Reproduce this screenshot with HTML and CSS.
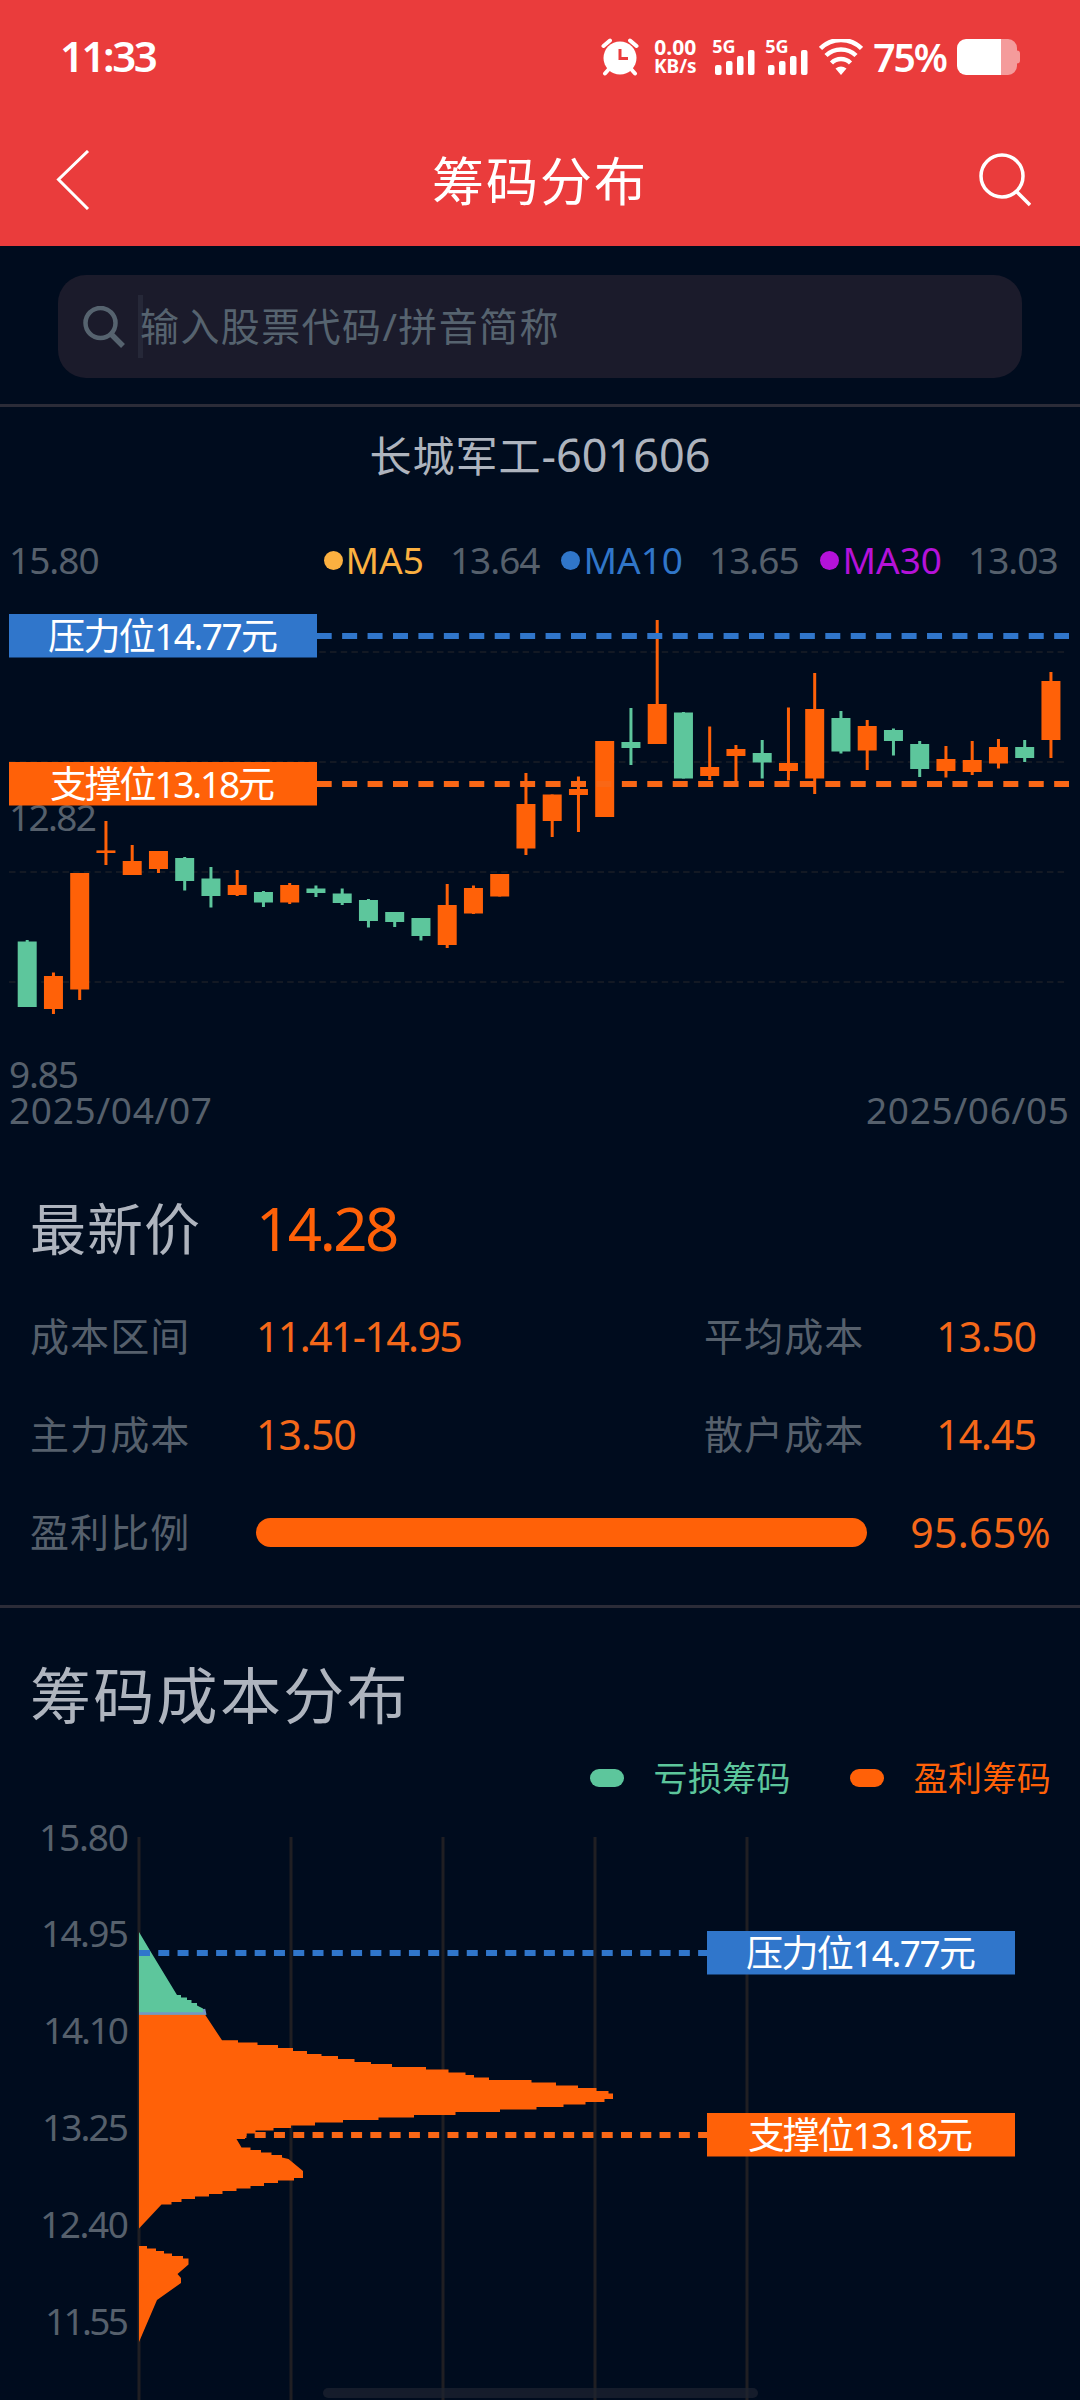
FILE: index.html
```
<!DOCTYPE html>
<html lang="zh-CN">
<head>
    <meta charset="UTF-8">
    <meta name="viewport" content="width=device-width, initial-scale=1.0">
    <title>筹码分布</title>
    <link rel="stylesheet" href="styles.css">
</head>
<body>
    <header class="header">
        <div class="status-bar">
            <span class="time">11:33</span>
            <svg class="alarm" width="38" height="38" viewBox="0 0 38 38">
                <circle cx="19" cy="20" r="16.500" fill="#fff"/>
                <path d="M2.500 8 9 2.500M35.500 8 29 2.500M8 31l-4 4.500M30 31l4 4.500" stroke="#fff" stroke-width="4" stroke-linecap="round"/>
                <path d="M19 11v9.500h8" fill="none" stroke="#ea3c3c" stroke-width="3"/>
            </svg>
            <div class="speed"><span>0.00</span><span>KB/s</span></div>
            <div class="signal">
                <span>5G</span>
                <svg width="42" height="26" viewBox="0 0 42 26">
                    <g fill="#fff"><rect x="2" y="16" width="6.500" height="10" rx="2"/><rect x="13" y="12" width="6.500" height="14" rx="2"/><rect x="24" y="7" width="6.500" height="19" rx="2"/><rect x="35" y="1" width="6.500" height="25" rx="2"/></g>
                </svg>
            </div>
            <div class="signal">
                <span>5G</span>
                <svg width="42" height="26" viewBox="0 0 42 26">
                    <g fill="#fff"><rect x="2" y="16" width="6.500" height="10" rx="2"/><rect x="13" y="12" width="6.500" height="14" rx="2"/><rect x="24" y="7" width="6.500" height="19" rx="2"/><rect x="35" y="1" width="6.500" height="25" rx="2"/></g>
                </svg>
            </div>
            <svg class="wifi" width="44" height="36" viewBox="0 0 44 36">
                <g fill="none" stroke="#fff" stroke-width="4.500">
                    <path d="M1.500 9.500a29 29 0 0 1 41 0"/>
                    <path d="M7 16.500a21.500 21.500 0 0 1 30 0"/>
                    <path d="M12.500 24a13.500 13.500 0 0 1 19 0"/>
                </g>
                <path d="M16.500 29.500q5.500-4 11 0L22 36z" fill="#fff"/>
            </svg>
            <span class="percent">75%</span>
            <svg class="battery" width="63" height="36" viewBox="0 0 63 36">
                <path d="M44 0h7a9 9 0 0 1 9 9v2.500q3 0 3 3v7q0 3-3 3V27a9 9 0 0 1-9 9h-7z" fill="#f49b9b"/>
                <path d="M9 0h35v36H9a9 9 0 0 1-9-9V9a9 9 0 0 1 9-9z" fill="#fff"/>
            </svg>
        </div>
        <div class="nav-bar">
            <svg width="34" height="60" viewBox="0 0 34 60"><path d="M32 1 2.500 29.500 32 59" fill="none" stroke="#fff" stroke-width="3"/></svg>
            <h1>筹码分布</h1>
            <svg width="52" height="54" viewBox="0 0 52 54"><circle cx="23" cy="23" r="21" fill="none" stroke="#fff" stroke-width="3.500"/><path d="M37 38l14 14" stroke="#fff" stroke-width="3.500"/></svg>
        </div>
    </header>

    <div class="search-wrap">
        <div class="search-box">
            <svg width="42" height="42" viewBox="0 0 42 42"><circle cx="17.500" cy="17" r="15" fill="none" stroke="#56636f" stroke-width="4.500"/><path d="M28 28l12 12" stroke="#56636f" stroke-width="5.500"/></svg>
            <span class="caret"></span>
            <span class="placeholder">输入股票代码/拼音简称</span>
        </div>
    </div>

    <section class="kline">
        <h2>长城军工<span>-601606</span></h2>
        <div class="ma-row">
            <span class="top-price">15.80</span>
            <span class="ma ma5"><i></i>MA5</span><span class="num">13.64</span>
            <span class="ma ma10"><i></i>MA10</span><span class="num">13.65</span>
            <span class="ma ma30"><i></i>MA30</span><span class="num">13.03</span>
        </div>
        <svg class="chart" id="kline" width="1080" height="540" viewBox="0 600 1080 540">
            <g class="grid-dash">
                <path d="M9 652H1066M9 762H1066M9 872H1066M9 982H1066"/>
            </g>
            <g class="axis">
                <text x="9" y="831" textLength="88">12.82</text>
                <text x="9" y="1087.500" textLength="70">9.85</text>
                <text x="9" y="1124" textLength="203">2025/04/07</text>
                <text x="866" y="1124" textLength="203">2025/06/05</text>
            </g>
            <g id="candles"></g>
            <path class="dash blue" d="M316.700 636H1069"/>
            <path class="dash orange" d="M316.700 784H1069"/>
            <rect class="fill-blue" x="9" y="614" width="308" height="43.500"/>
            <rect class="fill-orange" x="9" y="762" width="308" height="43.500"/>
            <text class="tag" x="48" y="650" textLength="230">压力位14.77元</text>
            <text class="tag" x="50" y="798" textLength="225">支撑位13.18元</text>
        </svg>
    </section>

    <section class="stats">
        <div class="stat-row latest"><span class="label">最新价</span><span class="value">14.28</span></div>
        <div class="stat-row">
            <span class="label">成本区间</span><span class="value range">11.41-14.95</span>
            <span class="label second">平均成本</span><span class="value right">13.50</span>
        </div>
        <div class="stat-row">
            <span class="label">主力成本</span><span class="value">13.50</span>
            <span class="label second">散户成本</span><span class="value right">14.45</span>
        </div>
        <div class="stat-row">
            <span class="label">盈利比例</span>
            <span class="progress"></span>
            <span class="value ratio">95.65%</span>
        </div>
    </section>

    <section class="chips">
        <h2>筹码成本分布</h2>
        <div class="legend">
            <span class="loss"><i></i>亏损筹码</span>
            <span class="profit"><i></i>盈利筹码</span>
        </div>
        <svg class="chart" width="1080" height="590" viewBox="0 1810 1080 590">
            <path class="grid-line" d="M139 1837V2400M291 1837V2400M443 1837V2400M595 1837V2400M747 1837V2400"/>
            <g class="axis">
                <text x="39" y="1850.500" textLength="90">15.80</text>
                <text x="41" y="1946.500" textLength="88">14.95</text>
                <text x="43" y="2044" textLength="86">14.10</text>
                <text x="42" y="2140.500" textLength="87">13.25</text>
                <text x="40" y="2238" textLength="89">12.40</text>
                <text x="45" y="2334.500" textLength="84">11.55</text>
            </g>
            <path class="dash-small orange" d="M139 2135H707"/>
            <path class="fill-green" d="M139 1932 151.500 1953 177 1995H181V1997.500H187V2000H191.500V2003H197V2005.500L203 2008.500 206 2015H139Z"/>
            <path class="fill-orange" d="M139 2014.500H205L222 2040.300H238V2042.500H257.500V2045H278V2048H293V2051H307V2054H321.500V2056H338V2059H354.500V2062H371V2064H392V2067H426V2069.500H448.500V2072.500H465.500V2075H474V2077.500H489V2080H531.500V2082.500H556V2085.500H578V2088H596.500V2091H608.500V2093.500H613V2099H604.500V2102H585.500V2104.500H563.500V2107H536.500V2109.500H500V2112H455.500V2115H414V2117.500H378.500V2120H343V2122.500H315V2125.500H291V2128H273.500V2130.500H255.500V2133.500H246.500V2136H245V2139H236.500L241.500 2147.500H250.500V2150H261V2152.500H271.500V2155H282V2157.500L288.500 2159 303 2171V2178H294V2180.500H278V2183H264V2186H250.500V2188.500H236.500V2191H222.500V2194H209V2196.500H195V2199H181.500V2202H171.500V2204.500H161.500L139 2228.500Z"/>
            <path class="fill-orange" d="M139 2246H147V2248.500H156V2251H164V2253.500H172V2256H183V2258.500H188.500V2264.500L177.500 2274 181 2278V2283L157 2300 139 2342Z"/>
            <path d="M139 2013.500H205L204 2009" fill="none" stroke="#7396c4" stroke-width="2.500"/>
            <path class="dash-small blue" d="M139 1953H707"/>
            <rect class="fill-blue" x="707" y="1931" width="308" height="43.500"/>
            <rect class="fill-orange" x="707" y="2113" width="308" height="43.500"/>
            <text class="tag" x="746" y="1967" textLength="230">压力位14.77元</text>
            <text class="tag" x="748" y="2149" textLength="225">支撑位13.18元</text>
        </svg>
    </section>
    <div class="home-bar"></div>

    <script src="script.js"></script>
</body>
</html>
```
FILE: styles.css
```
* {
    box-sizing: border-box;
}

body {
    margin: 0;
    height: 2400px;
    overflow: hidden;
    position: relative;
    background-color: #000c1e;
    color: #aeb4be;
    font-family: "Noto Sans", "Noto Sans CJK SC", sans-serif;
}

h1, h2 {
    margin: 0;
    font-weight: 400;
}

svg {
    display: block;
    flex-shrink: 0;
}

/* Header */
.header {
    height: 246px;
    background-color: #ea3c3c;
    color: #fff;
}

.status-bar {
    display: flex;
    align-items: center;
    height: 114px;
    padding: 0 60px 0 60px;
}

.time {
    font-size: 42px;
    font-weight: 600;
    line-height: 50px;
    letter-spacing: -2.5px;
    margin: -2px auto 0 0;
}

.speed {
    display: flex;
    flex-direction: column;
    align-items: center;
    width: 50px;
    margin: 0 13px 0 11px;
    font-size: 21px;
    font-weight: 700;
    line-height: 19px;
}

.speed span + span {
    font-size: 19px;
}

.signal {
    position: relative;
    width: 42px;
    height: 36px;
    padding-top: 10px;
    margin-right: 11px;
}

.signal span {
    position: absolute;
    left: -1px;
    top: -2px;
    font-size: 18px;
    font-weight: 700;
    line-height: 18px;
}

.percent {
    font-size: 39px;
    font-weight: 600;
    line-height: 50px;
    letter-spacing: -2px;
    margin: 0 11px 0 10px;
}

.nav-bar {
    display: flex;
    align-items: center;
    justify-content: space-between;
    height: 132px;
    padding: 0 49px 0 56px;
}

.nav-bar svg {
    margin-bottom: 1px;
}

.nav-bar h1 {
    font-size: 52px;
    line-height: 60px;
    letter-spacing: 2px;
    margin: 2px 0 0 11px;
}

/* Search */
.search-wrap {
    height: 161px;
    padding: 29px 58px;
    border-bottom: 3px solid #2b2c38;
}

.search-box {
    display: flex;
    align-items: center;
    height: 103px;
    padding-left: 25px;
    border-radius: 28px;
    background-color: #1b1b2b;
}

.caret {
    width: 5px;
    height: 63px;
    margin-left: 13px;
    background-color: #262838;
}

.placeholder {
    font-size: 39px;
    line-height: 50px;
    letter-spacing: 1.4px;
    margin: -2px 0 0 -3px;
    color: #56636f;
}

/* K line */
.kline {
    height: 758px;
}

.kline h2 {
    height: 96px;
    padding-top: 18px;
    font-size: 42px;
    line-height: 60px;
    letter-spacing: 1px;
    text-align: center;
}

.kline h2 span {
    font-size: 45px;
    letter-spacing: 0;
}

.ma-row {
    display: flex;
    align-items: center;
    height: 97px;
    padding: 17px 22px 0 9px;
    font-size: 37px;
    line-height: 50px;
    letter-spacing: -1px;
}

.top-price {
    margin-right: auto;
}

.top-price, .num {
    color: #56606c;
}

.ma {
    display: flex;
    align-items: center;
    letter-spacing: 0;
}

.ma i {
    width: 19px;
    height: 19px;
    margin-right: 3px;
    border-radius: 50%;
    background-color: currentColor;
}

.num {
    width: 90px;
    margin: 0 21.5px 0 26px;
}

.num:last-child {
    margin-right: 0;
}

.ma5 { color: #fbb040; }
.ma10 { color: #3076c9; }
.ma30 { color: #b512d9; }

/* Charts */
.axis text {
    font-size: 37px;
    fill: #56606c;
}

.tag {
    font-size: 37px;
    fill: #fff;
}

.fill-blue { fill: #3076cb; }
.fill-orange { fill: #ff6108; }
.fill-green { fill: #5dc69c; }

.blue { stroke: #3076cb; }
.orange { stroke: #f96716; }

.dash {
    stroke-width: 6;
    stroke-dasharray: 15 10.43;
}

.dash-small {
    stroke-width: 6;
    stroke-dasharray: 11 8.28;
}

.grid-dash path {
    stroke: #131924;
    stroke-width: 2;
    stroke-dasharray: 6.5 4.2;
}

.grid-line {
    stroke: #201f23;
    stroke-width: 3;
}

/* Stats */
.stats {
    height: 443px;
    padding: 21px 0 0 30px;
    border-bottom: 3px solid #2b2c38;
}

.stat-row {
    display: flex;
    align-items: center;
    height: 98px;
    font-size: 39px;
    line-height: 60px;
}

.stat-row .label {
    width: 226px;
    letter-spacing: 1.1px;
    color: #56606c;
}

.stat-row .value {
    width: 448px;
    font-size: 41px;
    letter-spacing: -1px;
    color: #f5681a;
}

.stat-row .range {
    letter-spacing: -1.6px;
}

.stat-row .second {
    width: 180px;
}

.stat-row .right {
    width: 152px;
    text-align: right;
}

.latest {
    height: 87px;
    margin-bottom: 14px;
}

.latest .label {
    font-size: 56px;
    letter-spacing: 1px;
    margin-top: -3px;
    color: #aeb4be;
}

.latest .value {
    font-size: 60px;
    letter-spacing: -2.5px;
    margin-top: -3px;
    color: #ff6108;
}

.progress {
    width: 611px;
    height: 29px;
    border-radius: 15px;
    background-color: #ff6108;
}

.stat-row .ratio {
    width: 184px;
    letter-spacing: 0.3px;
    text-align: right;
}

/* Chip distribution */
.chips {
    height: 792px;
}

.chips h2 {
    height: 128px;
    padding: 46px 0 0 30px;
    font-size: 61px;
    line-height: 84px;
    letter-spacing: 2.3px;
}

.legend {
    display: flex;
    justify-content: flex-end;
    align-items: center;
    gap: 59px;
    height: 74px;
    padding: 9px 29px 0 0;
    font-size: 34px;
    line-height: 50px;
    letter-spacing: 0.3px;
}

.legend span {
    display: flex;
    align-items: center;
}

.legend i {
    width: 34px;
    height: 18px;
    margin-right: 30px;
    border-radius: 9px;
    background-color: currentColor;
}

.loss { color: #5dc69c; }
.profit { color: #ff6108; }

.home-bar {
    position: absolute;
    left: 323px;
    top: 2388px;
    width: 435px;
    height: 10px;
    border-radius: 5px;
    background-color: rgba(30, 36, 48, 0.7);
}
```
FILE: script.js
```
// [up, high, top, bottom, low]
const candles = [
    [0, 940, 941.5, 1007, 1007], [1, 972.5, 976, 1009, 1014], [1, 873, 873, 989.5, 1000],
    [1, 821, 850.4, 853, 865], [1, 845, 861, 875, 875], [1, 851, 851, 869, 873],
    [0, 857, 858, 881, 890.5], [0, 867, 878.5, 896, 907.5], [1, 870, 885, 895, 896],
    [0, 891, 892, 902.5, 907], [1, 883, 885, 902.5, 904], [0, 885.5, 888.5, 893, 897],
    [0, 888.5, 893.5, 903, 905], [0, 899, 900, 921, 927.5], [0, 912, 912, 922, 927],
    [0, 918, 918, 936, 940.5], [1, 884, 905, 945, 948], [1, 885.5, 888, 913.5, 914],
    [1, 874, 874, 896.5, 896.5], [1, 773, 804, 848.5, 855], [1, 794.5, 794.5, 821, 837],
    [1, 776.5, 789, 795, 832], [1, 741, 741, 817, 817], [0, 708, 742, 748, 765],
    [1, 620, 704, 744, 744], [0, 712, 712.5, 778.5, 778.5], [1, 726.5, 767, 776, 780],
    [1, 745, 749, 756, 783], [0, 740, 753, 762.5, 778.5], [1, 707.5, 763, 771, 780.5],
    [1, 673, 709, 778.5, 794], [0, 711, 718, 751.5, 753.5], [1, 720, 726, 750.5, 770],
    [0, 728.5, 730, 741, 755.5], [0, 741, 744, 769, 777], [1, 746, 759, 771, 777.5],
    [1, 741, 760, 772, 775], [1, 739, 747, 763.5, 768.5], [0, 740, 747, 758, 762],
    [1, 672, 681, 740, 758]
];

const step = 26.25;
let html = '';
candles.forEach(([up, high, top, bottom, low], i) => {
    const x = 27.2 + i * step;
    const cls = up ? 'fill-orange' : 'fill-green';
    html += `<rect class="${cls}" x="${x - 1.5}" y="${high}" width="3" height="${low - high}"/>`;
    html += `<rect class="${cls}" x="${x - 9.5}" y="${top}" width="19" height="${bottom - top}"/>`;
});
document.getElementById('candles').innerHTML = html;
```
